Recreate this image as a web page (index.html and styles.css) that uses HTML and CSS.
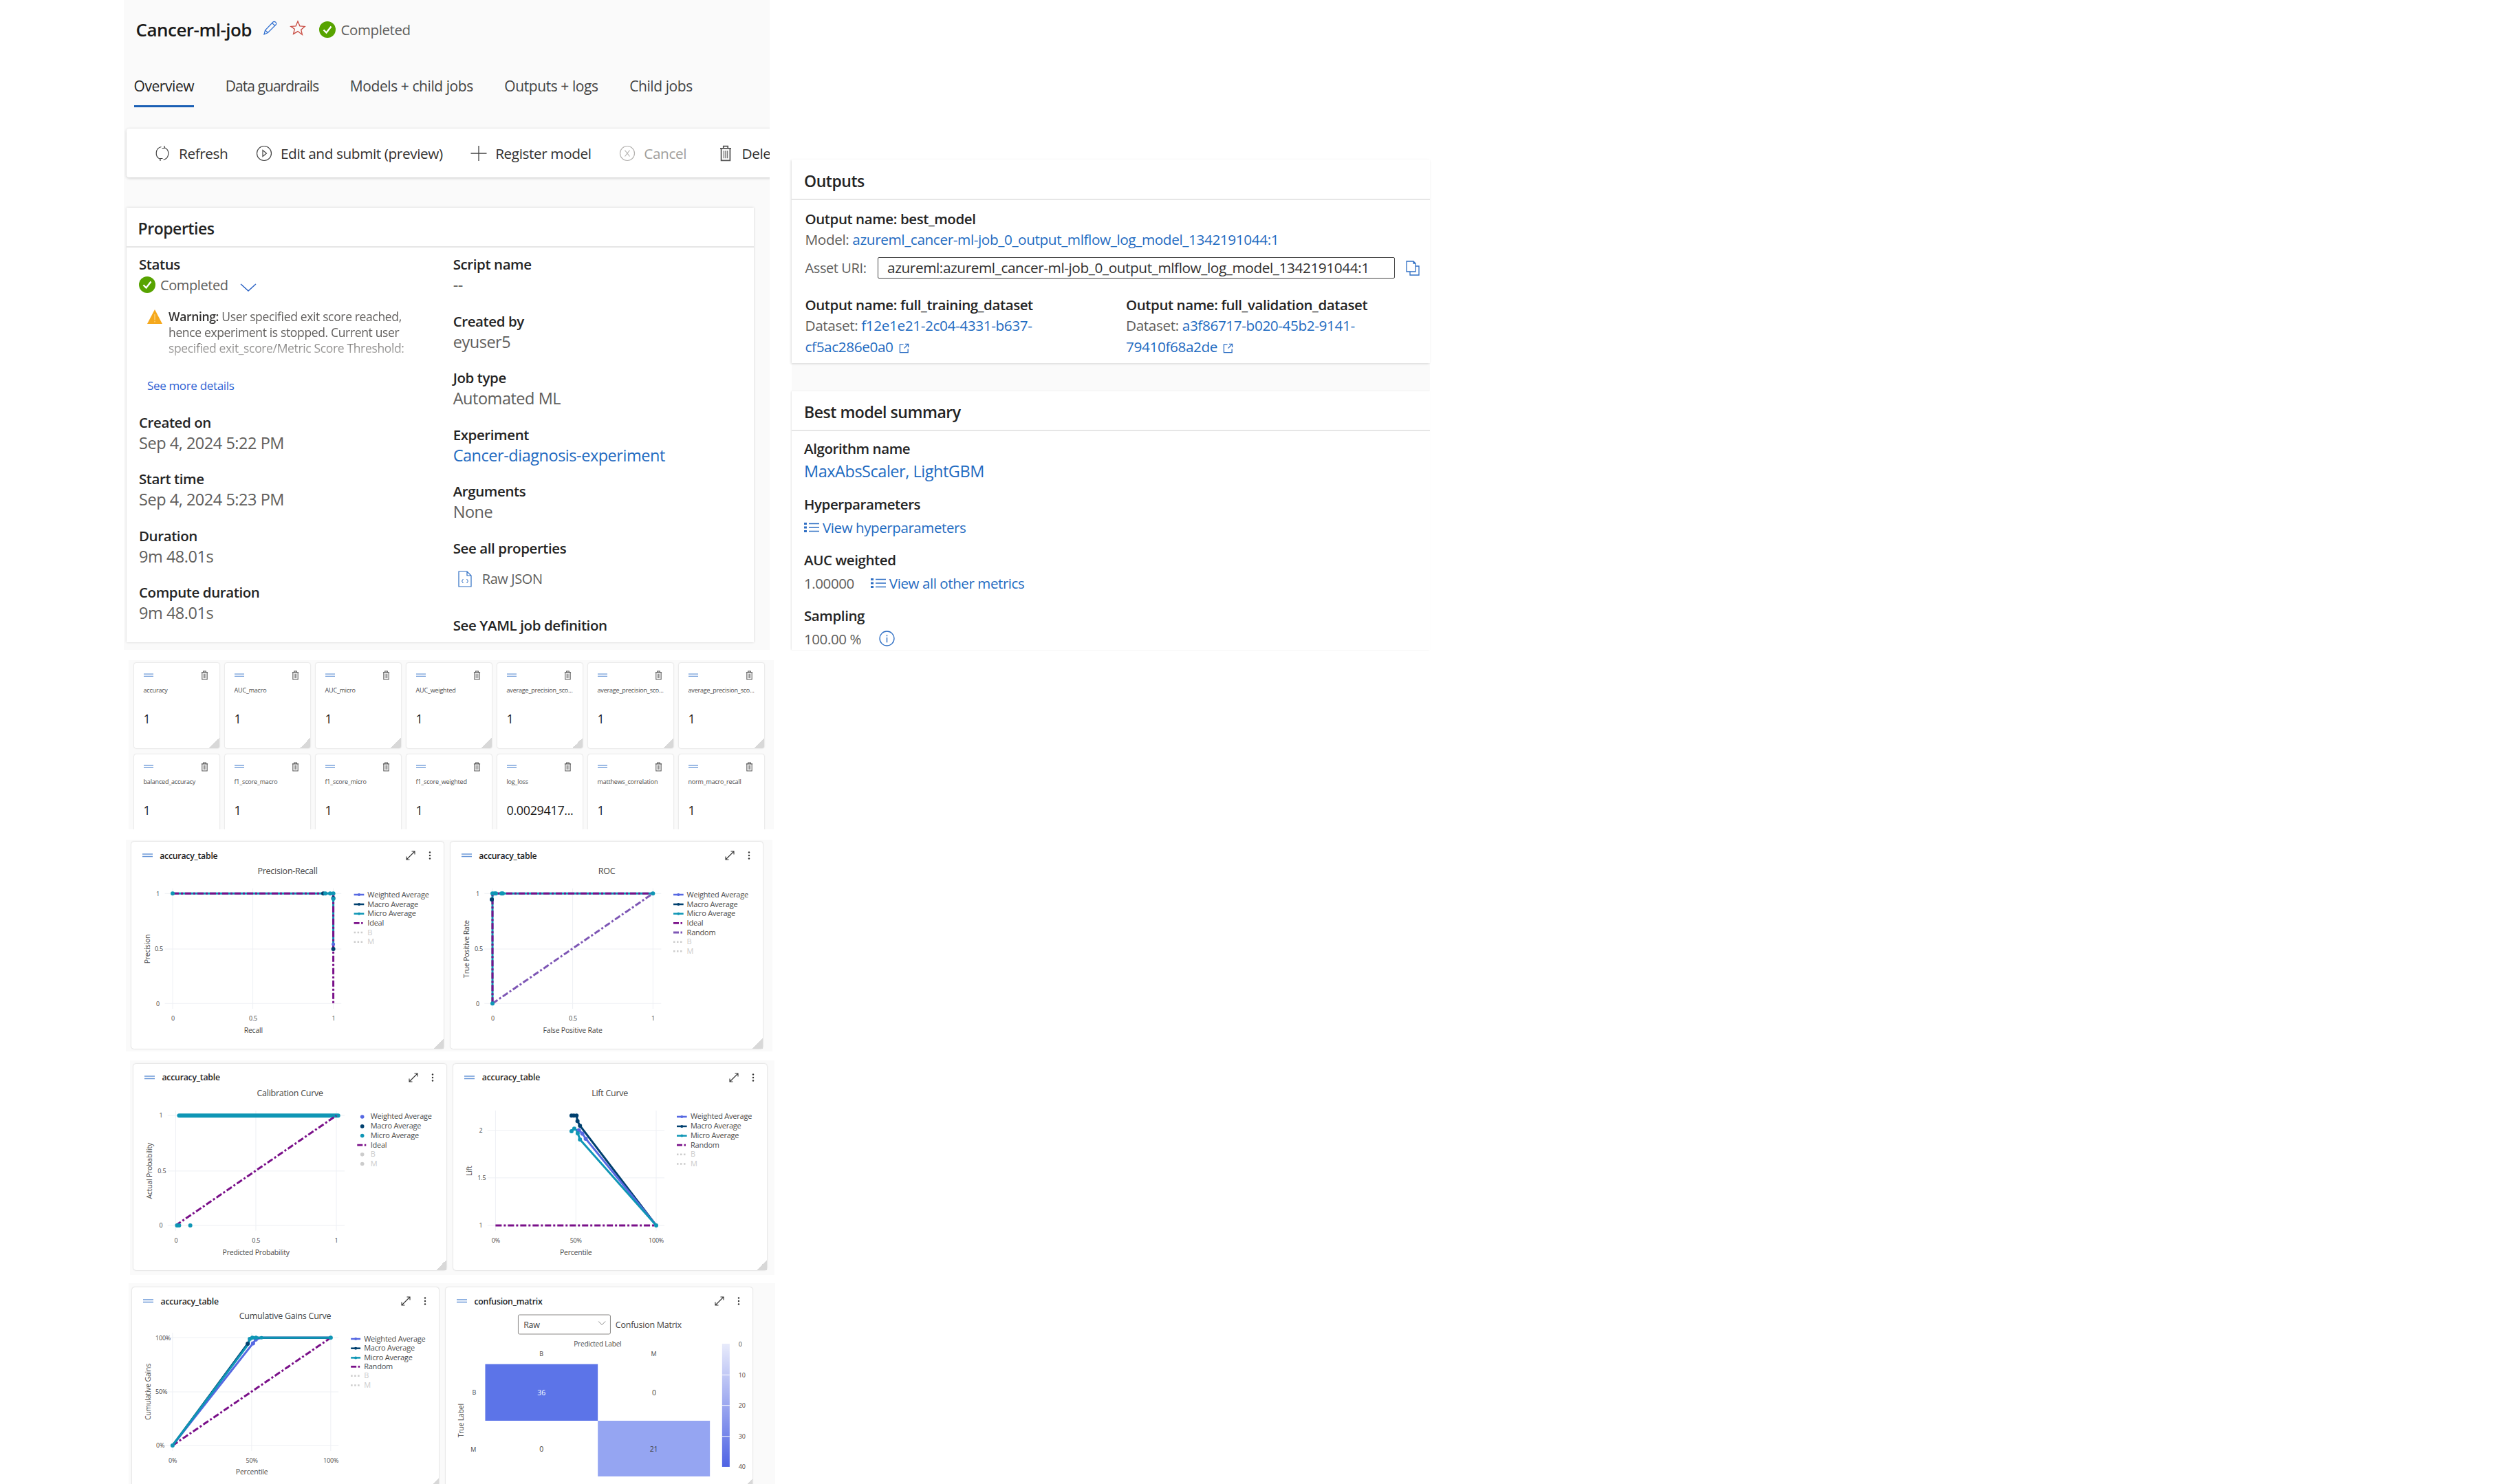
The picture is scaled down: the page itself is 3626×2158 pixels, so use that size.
FILE: index.html
```html
<!DOCTYPE html>
<html lang="en">
<head>
<meta charset="utf-8">
<title>Cancer-ml-job</title>
<link rel="stylesheet" href="styles.css">
</head>
<body>
<svg class="sprite" aria-hidden="true">
  <symbol id="i-check" viewBox="0 0 24 24"><circle cx="12" cy="12" r="12" fill="#57a300"/><path d="M6.5 12.5l4 4 7-9" fill="none" stroke="#fff" stroke-width="2.4"/></symbol>
  <symbol id="i-trash" viewBox="0 0 12 15"><path d="M1 3h10M4 3V1h4v2M2 3v11h8V3" fill="none" stroke="#555" stroke-width="1.1"/><path d="M4.4 5v7M6 5v7M7.6 5v7" stroke="#777" stroke-width=".9"/></symbol>
  <symbol id="i-eq" viewBox="0 0 15 6"><path d="M0 1h15M0 4.5h15" stroke="#6c99d8" stroke-width="1.4"/></symbol>
  <symbol id="i-expand" viewBox="0 0 14 14"><path d="M1 13L13 1M8.5 1H13V5.5M1 8.5V13H5.5" fill="none" stroke="#333" stroke-width="1.1"/></symbol>
  <symbol id="i-dots" viewBox="0 0 4 12"><circle cx="2" cy="1.5" r="1.2" fill="#333"/><circle cx="2" cy="6" r="1.2" fill="#333"/><circle cx="2" cy="10.5" r="1.2" fill="#333"/></symbol>
  <symbol id="i-list" viewBox="0 0 22 16"><path d="M7 2.5h15M7 8h15M7 13.500h15" stroke="#2f6fc4" stroke-width="1.3"/><path d="M0 1h4v3H0zM0 6.500h4v3H0zM0 12h4v3H0z" fill="#2f6fc4"/></symbol>
  <symbol id="i-ext" viewBox="0 0 16 16"><path d="M7 2H1.500v12.500H14V9M9.500 1.500H14.500V6.500M14.500 1.500L8 8" fill="none" stroke="#2f6fc4" stroke-width="1.4"/></symbol>
</svg>

<div class="page">
  <div class="left">
    <section class="job">
      <header class="job-head">
        <h1 class="job-title">Cancer-ml-job</h1>
        <svg class="ic-pencil" viewBox="0 0 24 24"><path d="M3.500 21l1.500-6L16.500 3a2.300 2.300 0 0 1 3.300 0l.7.7a2.300 2.300 0 0 1 0 3.300L9 18.500zM5 15l4 3.500M15 4.500l4.500 4" fill="none" stroke="#2f6fd0" stroke-width="1.2"/></svg>
        <svg class="ic-star" viewBox="0 0 24 24"><path d="M12 2l2.900 6.800 7.300.6-5.500 4.800 1.700 7.200L12 16.600l-6.400 3.800 1.700-7.200L1.800 9.400l7.300-.6z" fill="none" stroke="#c8493f" stroke-width="1.300"/></svg>
        <svg class="ic-check-lg"><use href="#i-check"/></svg>
        <span class="job-status">Completed</span>
      </header>
      <nav class="tabs">
        <a class="tab active">Overview</a>
        <a class="tab tight">Data guardrails</a>
        <a class="tab">Models + child jobs</a>
        <a class="tab">Outputs + logs</a>
        <a class="tab">Child jobs</a>
      </nav>
      <div class="toolbar">
        <span class="tool"><svg class="tool-ic" viewBox="0 0 24 24"><path d="M10.500 2.500A9.500 9.500 0 0 0 9 20.500M13.500 21.500A9.500 9.500 0 0 0 15 3.500M15 1v3.500h-3.500M9 23v-3.500h3.500" fill="none" stroke="#444" stroke-width="1.200"/></svg>Refresh</span>
        <span class="tool"><svg class="tool-ic" viewBox="0 0 24 24"><circle cx="12" cy="12" r="10.500" fill="none" stroke="#444" stroke-width="1.200"/><path d="M10 7.500l5.500 4.500-5.500 4.500z" fill="none" stroke="#444" stroke-width="1.200"/></svg>Edit and submit (preview)</span>
        <span class="tool"><svg class="tool-ic" viewBox="0 0 24 24"><path d="M12 1v22M0.500 12h23" stroke="#444" stroke-width="1.300"/></svg>Register model</span>
        <span class="tool disabled"><svg class="tool-ic" viewBox="0 0 24 24"><circle cx="12" cy="12" r="10.500" fill="none" stroke="#b5b3b1" stroke-width="1.200"/><path d="M8.500 7.500l7 9M15.500 7.500l-7 9" stroke="#b5b3b1" stroke-width="1.200"/></svg>Cancel</span>
        <span class="tool tool-last"><svg class="tool-ic" viewBox="0 0 12 15"><use href="#i-trash"/></svg>Delete</span>
      </div>
      <article class="props">
        <h2 class="card-head props-head">Properties</h2>
        <div class="props-grid">
          <div>
            <h3 class="label">Status</h3>
            <div class="status-row">
              <svg class="ic-check"><use href="#i-check"/></svg>
              <span class="status-text">Completed</span>
              <svg class="ic-chevron" viewBox="0 0 24 12"><path d="M1 1l11 10L23 1" fill="none" stroke="#2b62c4" stroke-width="1.500"/></svg>
            </div>
            <div class="warn">
              <svg class="ic-warn" viewBox="0 0 22 21"><path d="M11 0l11 21H0z" fill="#f5a81c"/><path d="M11 7v8M11 16.500v2" stroke="#fbd27a" stroke-width="1.400"/></svg>
              <p class="warn-text"><b>Warning:</b> User specified exit score reached,<br>hence experiment is stopped. Current user<br>specified exit_score/Metric Score Threshold:</p>
            </div>
            <a class="more">See more details</a>
            <div class="field first"><h3 class="label">Created on</h3><p class="value">Sep 4, 2024 5:22 PM</p></div>
            <div class="field"><h3 class="label">Start time</h3><p class="value">Sep 4, 2024 5:23 PM</p></div>
            <div class="field"><h3 class="label">Duration</h3><p class="value">9m 48.01s</p></div>
            <div class="field"><h3 class="label">Compute duration</h3><p class="value">9m 48.01s</p></div>
          </div>
          <div>
            <div class="field"><h3 class="label">Script name</h3><p class="value">--</p></div>
            <div class="field"><h3 class="label">Created by</h3><p class="value">eyuser5</p></div>
            <div class="field"><h3 class="label">Job type</h3><p class="value">Automated ML</p></div>
            <div class="field"><h3 class="label">Experiment</h3><p class="value link">Cancer-diagnosis-experiment</p></div>
            <div class="field"><h3 class="label">Arguments</h3><p class="value">None</p></div>
            <h3 class="label">See all properties</h3>
            <div class="raw"><svg class="ic-doc" viewBox="0 0 20 24"><path d="M1 1h12l6 6v16H1zM13 1v6h6" fill="none" stroke="#2f6fc4" stroke-width="1.200"/><path d="M7.500 12l-2 3 2 3M12.500 12l2 3-2 3" fill="none" stroke="#2f6fc4" stroke-width="1"/></svg>Raw JSON</div>
            <h3 class="label yaml">See YAML job definition</h3>
          </div>
        </div>
      </article>
    </section>

    <section class="metrics">
      <div class="tile"><div class="tile-top"><svg class="eq"><use href="#i-eq"/></svg><svg class="tile-trash"><use href="#i-trash"/></svg></div><div class="tile-name">accuracy</div><div class="tile-val">1</div></div>
      <div class="tile"><div class="tile-top"><svg class="eq"><use href="#i-eq"/></svg><svg class="tile-trash"><use href="#i-trash"/></svg></div><div class="tile-name">AUC_macro</div><div class="tile-val">1</div></div>
      <div class="tile"><div class="tile-top"><svg class="eq"><use href="#i-eq"/></svg><svg class="tile-trash"><use href="#i-trash"/></svg></div><div class="tile-name">AUC_micro</div><div class="tile-val">1</div></div>
      <div class="tile"><div class="tile-top"><svg class="eq"><use href="#i-eq"/></svg><svg class="tile-trash"><use href="#i-trash"/></svg></div><div class="tile-name">AUC_weighted</div><div class="tile-val">1</div></div>
      <div class="tile"><div class="tile-top"><svg class="eq"><use href="#i-eq"/></svg><svg class="tile-trash"><use href="#i-trash"/></svg></div><div class="tile-name">average_precision_sco...</div><div class="tile-val">1</div></div>
      <div class="tile"><div class="tile-top"><svg class="eq"><use href="#i-eq"/></svg><svg class="tile-trash"><use href="#i-trash"/></svg></div><div class="tile-name">average_precision_sco...</div><div class="tile-val">1</div></div>
      <div class="tile"><div class="tile-top"><svg class="eq"><use href="#i-eq"/></svg><svg class="tile-trash"><use href="#i-trash"/></svg></div><div class="tile-name">average_precision_sco...</div><div class="tile-val">1</div></div>
      <div class="tile"><div class="tile-top"><svg class="eq"><use href="#i-eq"/></svg><svg class="tile-trash"><use href="#i-trash"/></svg></div><div class="tile-name">balanced_accuracy</div><div class="tile-val">1</div></div>
      <div class="tile"><div class="tile-top"><svg class="eq"><use href="#i-eq"/></svg><svg class="tile-trash"><use href="#i-trash"/></svg></div><div class="tile-name">f1_score_macro</div><div class="tile-val">1</div></div>
      <div class="tile"><div class="tile-top"><svg class="eq"><use href="#i-eq"/></svg><svg class="tile-trash"><use href="#i-trash"/></svg></div><div class="tile-name">f1_score_micro</div><div class="tile-val">1</div></div>
      <div class="tile"><div class="tile-top"><svg class="eq"><use href="#i-eq"/></svg><svg class="tile-trash"><use href="#i-trash"/></svg></div><div class="tile-name">f1_score_weighted</div><div class="tile-val">1</div></div>
      <div class="tile"><div class="tile-top"><svg class="eq"><use href="#i-eq"/></svg><svg class="tile-trash"><use href="#i-trash"/></svg></div><div class="tile-name">log_loss</div><div class="tile-val">0.0029417...</div></div>
      <div class="tile"><div class="tile-top"><svg class="eq"><use href="#i-eq"/></svg><svg class="tile-trash"><use href="#i-trash"/></svg></div><div class="tile-name">matthews_correlation</div><div class="tile-val">1</div></div>
      <div class="tile"><div class="tile-top"><svg class="eq"><use href="#i-eq"/></svg><svg class="tile-trash"><use href="#i-trash"/></svg></div><div class="tile-name">norm_macro_recall</div><div class="tile-val">1</div></div>
    </section>

    <section class="chart-row row-a">
      <div class="chart-card">
        <div class="chart-head"><svg class="eq"><use href="#i-eq"/></svg><span class="chart-name">accuracy_table</span><svg class="expand"><use href="#i-expand"/></svg><svg class="dots"><use href="#i-dots"/></svg></div>
        <svg class="plot" viewBox="0 34 454 267">
          <text class="c-title" x="227" y="47">Precision-Recall</text>
          <path class="grid" d="M48.600 75.300H305.300M48.600 156H305.300M48.600 235.300H305.300M60 68V243M176.600 68V243M293.600 68V243"/>
          <text class="tick end" x="41" y="78.500">1</text><text class="tick end" x="46" y="159">0.5</text><text class="tick end" x="41" y="238.500">0</text>
          <text class="tick mid" x="60.500" y="260">0</text><text class="tick mid" x="177" y="260">0.5</text><text class="tick mid" x="294" y="260">1</text>
          <text class="axis mid" x="177.300" y="278">Recall</text>
          <text class="axis mid" transform="translate(27 156) rotate(-90)">Precision</text>
          <path class="ln mi" d="M60 75.300H293.600V156"/>
          <path class="ln id" d="M60 75.300H293.600V235.300"/>
          <circle class="d-mi" cx="60" cy="75.300" r="3"/><circle class="d-ma" cx="279" cy="75.300" r="3"/><circle class="d-mi" cx="282" cy="75.300" r="3"/><circle class="d-mi" cx="289" cy="75.300" r="3"/><circle class="d-mi" cx="293.600" cy="75.300" r="3"/><circle class="d-ma" cx="293.600" cy="82" r="3"/><circle class="d-mi" cx="293.600" cy="83" r="3"/><circle class="d-w" cx="293.600" cy="149" r="2.500"/><circle class="d-ma" cx="293.600" cy="156" r="3"/>
          <path class="lg-l s-w" d="M323.600 77h14.700"/><circle class="d-w" cx="331" cy="77" r="2"/><text class="lg" x="343.300" y="80.500">Weighted Average</text>
          <path class="lg-l s-ma" d="M323.600 91h14.700"/><circle class="d-ma" cx="331" cy="91" r="2"/><text class="lg" x="343.300" y="94.500">Macro Average</text>
          <path class="lg-l s-mi" d="M323.600 104.700h14.700"/><circle class="d-mi" cx="331" cy="104.700" r="2"/><text class="lg" x="343.300" y="108.200">Micro Average</text>
          <path class="lg-l s-id" d="M323.600 118.300h14.700"/><text class="lg" x="343.300" y="121.800">Ideal</text>
          <path class="lg-d" d="M323.600 132h14.700"/><text class="lg off" x="343.300" y="135.500">B</text>
          <path class="lg-d" d="M323.600 145.700h14.700"/><text class="lg off" x="343.300" y="149.200">M</text>
        </svg>
      </div>
      <div class="chart-card">
        <div class="chart-head"><svg class="eq"><use href="#i-eq"/></svg><span class="chart-name">accuracy_table</span><svg class="expand"><use href="#i-expand"/></svg><svg class="dots"><use href="#i-dots"/></svg></div>
        <svg class="plot" viewBox="0 34 454 267">
          <text class="c-title" x="227" y="47">ROC</text>
          <path class="grid" d="M49.300 75.300H306.300M49.300 156H306.300M49.300 235.300H306.300M61 68V243M177.600 68V243M294.300 68V243"/>
          <text class="tick end" x="42" y="78.500">1</text><text class="tick end" x="47" y="159">0.5</text><text class="tick end" x="42" y="238.500">0</text>
          <text class="tick mid" x="61.500" y="260">0</text><text class="tick mid" x="178" y="260">0.5</text><text class="tick mid" x="294.500" y="260">1</text>
          <text class="axis mid" x="177.600" y="278">False Positive Rate</text>
          <text class="axis mid" transform="translate(27 156) rotate(-90)">True Positive Rate</text>
          <path class="ln ra" d="M61 235.300L294.300 75.300"/>
          <path class="ln mi" d="M61 235.300V75.300H294.300"/>
          <path class="ln id" d="M61 235.300V75.300H294.300"/>
          <circle class="d-mi" cx="61" cy="235.300" r="3"/><circle class="d-ma" cx="60" cy="84" r="3"/><circle class="d-mi" cx="61" cy="75.300" r="3"/><circle class="d-mi" cx="64" cy="75.300" r="3"/><circle class="d-mi" cx="66" cy="75.300" r="3"/><circle class="d-mi" cx="74" cy="75.300" r="3"/><circle class="d-mi" cx="76" cy="75.300" r="3"/><circle class="d-mi" cx="294.300" cy="75.300" r="3"/>
          <path class="lg-l s-w" d="M324 77h14.700"/><circle class="d-w" cx="331.300" cy="77" r="2"/><text class="lg" x="343.600" y="80.500">Weighted Average</text>
          <path class="lg-l s-ma" d="M324 91h14.700"/><circle class="d-ma" cx="331.300" cy="91" r="2"/><text class="lg" x="343.600" y="94.500">Macro Average</text>
          <path class="lg-l s-mi" d="M324 104.700h14.700"/><circle class="d-mi" cx="331.300" cy="104.700" r="2"/><text class="lg" x="343.600" y="108.200">Micro Average</text>
          <path class="lg-l s-id" d="M324 118.300h14.700"/><text class="lg" x="343.600" y="121.800">Ideal</text>
          <path class="lg-l s-ra" d="M324 132h14.700"/><text class="lg" x="343.600" y="135.500">Random</text>
          <path class="lg-d" d="M324 145.700h14.700"/><text class="lg off" x="343.600" y="149.200">B</text>
          <path class="lg-d" d="M324 159.300h14.700"/><text class="lg off" x="343.600" y="162.800">M</text>
        </svg>
      </div>
    </section>

    <section class="chart-row row-b">
      <div class="chart-card">
        <div class="chart-head"><svg class="eq"><use href="#i-eq"/></svg><span class="chart-name">accuracy_table</span><svg class="expand"><use href="#i-expand"/></svg><svg class="dots"><use href="#i-dots"/></svg></div>
        <svg class="plot" viewBox="0 34 455 267">
          <text class="c-title" x="227.500" y="47">Calibration Curve</text>
          <path class="grid" d="M49.300 75.300H307M49.300 156H307M49.300 235.300H307M61 68V243M177.700 68V243M295 68V243"/>
          <text class="tick end" x="42" y="78.500">1</text><text class="tick end" x="47" y="159">0.5</text><text class="tick end" x="42" y="238.500">0</text>
          <text class="tick mid" x="61.500" y="260">0</text><text class="tick mid" x="178" y="260">0.5</text><text class="tick mid" x="295" y="260">1</text>
          <text class="axis mid" x="178" y="278">Predicted Probability</text>
          <text class="axis mid" transform="translate(27 156) rotate(-90)">Actual Probability</text>
          <path class="scatter" d="M66 75.300H297.700"/>
          <path class="ln id" d="M61 235.300L295 75.300"/>
          <circle class="d-mi" cx="63" cy="235.300" r="3"/><circle class="d-mi" cx="66" cy="235.300" r="3"/><circle class="d-mi" cx="82.300" cy="235.300" r="3"/>
          <circle class="d-w" cx="332.700" cy="77" r="2.800"/><text class="lg" x="344.700" y="80.500">Weighted Average</text>
          <circle class="d-ma" cx="332.700" cy="91" r="2.800"/><text class="lg" x="344.700" y="94.500">Macro Average</text>
          <circle class="d-mi" cx="332.700" cy="104.700" r="2.800"/><text class="lg" x="344.700" y="108.200">Micro Average</text>
          <path class="lg-l s-id" d="M325.300 118.300h14.700"/><text class="lg" x="344.700" y="121.800">Ideal</text>
          <circle class="d-off" cx="332.700" cy="132" r="2.800"/><text class="lg off" x="344.700" y="135.500">B</text>
          <circle class="d-off" cx="332.700" cy="145.700" r="2.800"/><text class="lg off" x="344.700" y="149.200">M</text>
        </svg>
      </div>
      <div class="chart-card">
        <div class="chart-head"><svg class="eq"><use href="#i-eq"/></svg><span class="chart-name">accuracy_table</span><svg class="expand"><use href="#i-expand"/></svg><svg class="dots"><use href="#i-dots"/></svg></div>
        <svg class="plot" viewBox="0 34 455 267">
          <text class="c-title" x="227.500" y="47">Lift Curve</text>
          <path class="grid" d="M49.300 96.600H307M49.300 166H307M49.300 235.300H307M61 68V243M178 68V243M295 68V243"/>
          <text class="tick end" x="42" y="99.800">2</text><text class="tick end" x="47" y="169">1.5</text><text class="tick end" x="42" y="238.500">1</text>
          <text class="tick mid" x="61.500" y="260">0%</text><text class="tick mid" x="178" y="260">50%</text><text class="tick mid" x="295" y="260">100%</text>
          <text class="axis mid" x="178" y="278">Percentile</text>
          <text class="axis mid" transform="translate(27 156) rotate(-90)">Lift</text>
          <path class="ln id" d="M61 235.300H295"/>
          <path class="ln s-ma" d="M171.700 75.300H179L180.400 83.300 184 90 295 235.300"/>
          <path class="ln s-w" d="M178 97L182.400 96.600 187.400 101.600 192.400 109 295 235.300"/>
          <path class="ln s-mi" d="M171.700 98L175.700 94.300 179 96.600 180.700 101 184 110 295 235.300"/>
          <circle class="d-ma" cx="171.700" cy="75.300" r="3"/><circle class="d-ma" cx="175" cy="75.300" r="3"/><circle class="d-ma" cx="179" cy="75.300" r="3"/><circle class="d-ma" cx="180.400" cy="83.300" r="3"/><circle class="d-ma" cx="184" cy="90" r="3"/>
          <circle class="d-w" cx="182.400" cy="96.600" r="3"/><circle class="d-w" cx="187.400" cy="101.600" r="3"/><circle class="d-w" cx="192.400" cy="109" r="3"/>
          <circle class="d-mi" cx="171.700" cy="98" r="3"/><circle class="d-mi" cx="175.700" cy="94.300" r="3"/><circle class="d-mi" cx="180.700" cy="101" r="3"/><circle class="d-mi" cx="184" cy="110" r="3"/><circle class="d-mi" cx="295" cy="235.300" r="3"/>
          <path class="lg-l s-w" d="M325 77h14.700"/><circle class="d-w" cx="332.300" cy="77" r="2"/><text class="lg" x="345" y="80.500">Weighted Average</text>
          <path class="lg-l s-ma" d="M325 91h14.700"/><circle class="d-ma" cx="332.300" cy="91" r="2"/><text class="lg" x="345" y="94.500">Macro Average</text>
          <path class="lg-l s-mi" d="M325 104.700h14.700"/><circle class="d-mi" cx="332.300" cy="104.700" r="2"/><text class="lg" x="345" y="108.200">Micro Average</text>
          <path class="lg-l s-id" d="M325 118.300h14.700"/><text class="lg" x="345" y="121.800">Random</text>
          <path class="lg-d" d="M325 132h14.700"/><text class="lg off" x="345" y="135.500">B</text>
          <path class="lg-d" d="M325 145.700h14.700"/><text class="lg off" x="345" y="149.200">M</text>
        </svg>
      </div>
    </section>

    <section class="chart-row row-c">
      <div class="chart-card">
        <div class="chart-head"><svg class="eq"><use href="#i-eq"/></svg><span class="chart-name">accuracy_table</span><svg class="expand"><use href="#i-expand"/></svg><svg class="dots"><use href="#i-dots"/></svg></div>
        <svg class="plot" viewBox="0 34 446 259">
          <text class="c-title" x="222.300" y="45.500">Cumulative Gains Curve</text>
          <path class="grid" d="M48 73.300H300M48 152H300M48 230H300M58.700 66V238M173.700 66V238M288.700 66V238"/>
          <text class="tick end" x="56" y="76.500">100%</text><text class="tick end" x="51" y="155">50%</text><text class="tick end" x="47" y="233">0%</text>
          <text class="tick mid" x="59" y="255">0%</text><text class="tick mid" x="174" y="255">50%</text><text class="tick mid" x="289" y="255">100%</text>
          <text class="axis mid" x="174" y="272">Percentile</text>
          <text class="axis mid" transform="translate(27 152) rotate(-90)">Cumulative Gains</text>
          <path class="ln id" d="M58.700 230L288.700 73.300"/>
          <path class="ln s-w" d="M58.700 230L175.700 81.400 179.700 76 188 73.300H288.700"/>
          <path class="ln s-ma" d="M58.700 230L168 82 170.700 76 174 73.300H288.700"/>
          <path class="ln s-mi" d="M58.700 230L168.700 83 171 75 174.700 73 180 73.300H288.700"/>
          <circle class="d-w" cx="175.700" cy="81.400" r="3"/><circle class="d-w" cx="179.700" cy="76" r="3"/><circle class="d-mi" cx="188" cy="73.300" r="2.500"/><circle class="d-ma" cx="168" cy="82" r="3"/><circle class="d-mi" cx="171" cy="75" r="3"/><circle class="d-mi" cx="174.700" cy="73.300" r="3"/><circle class="d-mi" cx="180" cy="73.300" r="3"/><circle class="d-mi" cx="58.700" cy="230" r="3"/><circle class="d-mi" cx="288.700" cy="73.300" r="3"/>
          <path class="lg-l s-w" d="M318 75h14"/><circle class="d-w" cx="325" cy="75" r="2"/><text class="lg" x="337" y="78.500">Weighted Average</text>
          <path class="lg-l s-ma" d="M318 88.700h14"/><circle class="d-ma" cx="325" cy="88.700" r="2"/><text class="lg" x="337" y="92.200">Macro Average</text>
          <path class="lg-l s-mi" d="M318 102.400h14"/><circle class="d-mi" cx="325" cy="102.400" r="2"/><text class="lg" x="337" y="105.900">Micro Average</text>
          <path class="lg-l s-id" d="M318 115.400h14"/><text class="lg" x="337" y="118.900">Random</text>
          <path class="lg-d" d="M318 128.700h14"/><text class="lg off" x="337" y="132.200">B</text>
          <path class="lg-d" d="M318 142.400h14"/><text class="lg off" x="337" y="145.900">M</text>
        </svg>
      </div>
      <div class="chart-card">
        <div class="chart-head"><svg class="eq"><use href="#i-eq"/></svg><span class="chart-name">confusion_matrix</span><svg class="expand"><use href="#i-expand"/></svg><svg class="dots"><use href="#i-dots"/></svg></div>
        <svg class="plot" viewBox="0 34 446 259">
          <rect class="sel-box" x="105.300" y="40" width="134" height="28" rx="2"/>
          <text class="sel-text" x="113" y="59">Raw</text>
          <path class="sel-chev" d="M222 49.500l5 5 5-5"/>
          <text class="c-title start" x="246.700" y="59">Confusion Matrix</text>
          <text class="tick2 mid" x="220.700" y="85.500">Predicted Label</text>
          <text class="tick mid" x="139" y="100">B</text><text class="tick mid" x="302.300" y="100">M</text>
          <rect class="cell-a" x="57.300" y="111.700" width="163.700" height="82.300"/>
          <rect class="cell-b" x="221" y="194" width="163" height="81"/>
          <text class="cell-w mid" x="139" y="156.500">36</text><text class="cell-d mid" x="302.700" y="156.500">0</text><text class="cell-d mid" x="139" y="239">0</text><text class="cell-d mid" x="302.300" y="239">21</text>
          <text class="tick mid" x="41.300" y="156">B</text><text class="tick mid" x="40" y="238.500">M</text>
          <text class="axis mid" transform="translate(26 193.700) rotate(-90)">True Label</text>
          <defs><linearGradient id="cbar" x1="0" y1="0" x2="0" y2="1"><stop offset="0" stop-color="#e8ebfb"/><stop offset="1" stop-color="#4f63e4"/></linearGradient></defs>
          <rect x="401.700" y="82" width="11" height="179" fill="url(#cbar)"/>
          <path class="cbar-tick" d="M401.700 127.400h11M401.700 171.700h11M401.700 216.700h11"/>
          <text class="tick" x="425.700" y="86">0</text><text class="tick" x="425.700" y="131">10</text><text class="tick" x="425.700" y="175">20</text><text class="tick" x="425.700" y="220">30</text><text class="tick" x="425.700" y="264">40</text>
        </svg>
      </div>
    </section>
  </div>

  <div class="right">
    <article class="out-card">
      <h2 class="card-head">Outputs</h2>
      <div class="out-body">
        <h3 class="label">Output name: best_model</h3>
        <p class="line">Model: <a class="link">azureml_cancer-ml-job_0_output_mlflow_log_model_1342191044:1</a></p>
        <div class="uri-row">
          <span class="uri-label">Asset URI:</span>
          <span class="uri-box">azureml:azureml_cancer-ml-job_0_output_mlflow_log_model_1342191044:1</span>
          <svg class="ic-copy" viewBox="0 0 20 22"><path d="M1 1h10l3 3v12H1zM11 1v3h3M6 16v5h13V8h-5" fill="none" stroke="#2f6fc4" stroke-width="1.300"/></svg>
        </div>
        <div class="ds-grid">
          <div><h3 class="label">Output name: full_training_dataset</h3><p class="line">Dataset: <a class="link">f12e1e21-2c04-4331-b637-<br>cf5ac286e0a0</a> <svg class="ic-ext"><use href="#i-ext"/></svg></p></div>
          <div><h3 class="label">Output name: full_validation_dataset</h3><p class="line">Dataset: <a class="link">a3f86717-b020-45b2-9141-<br>79410f68a2de</a> <svg class="ic-ext"><use href="#i-ext"/></svg></p></div>
        </div>
      </div>
    </article>
    <article class="sum-card">
      <h2 class="card-head sum-head">Best model summary</h2>
      <div class="sum-body">
        <div class="sum first-sum"><h3 class="label">Algorithm name</h3><p class="value link">MaxAbsScaler, LightGBM</p></div>
        <div class="sum"><h3 class="label">Hyperparameters</h3><p class="line2"><svg class="ic-list"><use href="#i-list"/></svg><a class="link">View hyperparameters</a></p></div>
        <div class="sum"><h3 class="label">AUC weighted</h3><p class="line2"><span class="num">1.00000</span><svg class="ic-list"><use href="#i-list"/></svg><a class="link">View all other metrics</a></p></div>
        <div class="sum"><h3 class="label">Sampling</h3><p class="line2"><span class="num pct">100.00 %</span><svg class="ic-info" viewBox="0 0 22 22"><circle cx="11" cy="11" r="10" fill="none" stroke="#2f6fc4" stroke-width="1.300"/><path d="M11 9.500v7M11 6v1.800" stroke="#2f6fc4" stroke-width="1.400"/></svg></p></div>
      </div>
    </article>
  </div>
</div>
</body>
</html>
```

FILE: styles.css
```css
* { box-sizing: border-box; letter-spacing: -0.02em; }
html, body { margin: 0; padding: 0; background: #fff; }
body { font-family: "Open Sans", "Noto Sans", sans-serif; color: #242424; }
h1, h2, h3, p { margin: 0; font-weight: inherit; font-size: inherit; }
.sprite { position: absolute; width: 0; height: 0; }

.page { display: flex; align-items: flex-start; width: 3626px; height: 2158px; padding-left: 180px; overflow: hidden; }
.left { width: 950px; flex: none; display: flex; flex-direction: column; }
.right { width: 928px; flex: none; margin: 232px 0 0 21px; background: #fafafa; }

/* job panel */
.job { width: 939px; height: 945px; background: #fafafa; overflow: hidden; }
.job-head { height: 86px; padding-left: 17.5px; display: flex; align-items: center; }
.job-title { font-size: 26px; font-weight: 600; color: #1a1a1a; line-height: 1; }
.ic-pencil { width: 25px; height: 24px; margin-left: 14px; margin-top: -4px; }
.ic-star { width: 24px; height: 24px; margin-left: 16px; margin-top: -4px; }
.ic-check-lg { width: 24px; height: 24px; margin-left: 19px; }
.job-status { margin-left: 7.5px; font-size: 20.5px; color: #605e5c; }

.tabs { display: flex; gap: 45.5px; margin-top: 14px; padding-left: 14.5px; }
.tab { font-size: 21px; line-height: 30px; height: 56px; padding-top: 10px; color: #444; }
.tab.tight { letter-spacing: -0.045em; }
.tab.active { color: #242424; border-bottom: 3px solid #1a5fb4; }

.toolbar { display: flex; align-items: center; gap: 40.5px; width: 980px; height: 71px; margin: 31px 0 0 3.500px; padding-left: 40.500px; background: #fff; border-radius: 4px; box-shadow: 0 1px 4px rgba(0,0,0,.2); }
.tool { display: flex; align-items: center; gap: 12px; font-size: 20.8px; color: #323130; white-space: nowrap; }
.tool.disabled { color: #a19f9d; }
.tool-last { margin-left: 4px; }
.tool-ic { width: 24px; height: 24px; flex: none; }

.props { width: 912.500px; height: 632px; margin: 44px 0 0 3.500px; background: #fff; box-shadow: 0 0 3px rgba(0,0,0,.18); overflow: hidden; }
.card-head { font-size: 23px; font-weight: 600; line-height: 30px; height: 58px; padding: 15px 0 0 17px; color: #242424; border-bottom: 2px solid #e6e6e6; }
.props-grid { display: grid; grid-template-columns: 456.700px 1fr; padding: 9px 0 0 18.500px; }
.label { font-size: 20.500px; font-weight: 600; line-height: 30px; color: #242424; }
.value { font-size: 23.500px; line-height: 30px; color: #605e5c; }
.link { color: #1f6bc1; }
.value.link { color: #1f6bc1; }
.field { margin-bottom: 22.500px; }
.field.first { margin-top: 26px; }
.status-row { display: flex; align-items: center; height: 30px; }
.ic-check { width: 24px; height: 24px; }
.status-text { margin-left: 7px; font-size: 20px; color: #605e5c; }
.ic-chevron { width: 24px; height: 12px; margin: 8px 0 0 17px; }
.warn { display: flex; gap: 9px; margin: 19.500px 0 0 12px; }
.ic-warn { width: 22px; height: 21px; flex: none; margin-top: 1px; }
.warn-text { font-size: 17.5px; line-height: 23px; color: #605e5c; white-space: nowrap; -webkit-mask-image: linear-gradient(#000 60%, rgba(0,0,0,.45)); mask-image: linear-gradient(#000 60%, rgba(0,0,0,.45)); }
.warn-text b { font-weight: 600; color: #323130; }
.more { display: block; margin: 31px 0 0 12px; font-size: 17px; line-height: 24px; color: #2f64d4; }
.raw { display: flex; align-items: center; gap: 15px; height: 30px; margin: 15px 0 0 7px; font-size: 20px; color: #605e5c; }
.ic-doc { width: 20px; height: 24px; }
.yaml { margin-top: 37px; }

/* metrics */
.metrics { display: grid; grid-template-columns: repeat(7, 124px); grid-auto-rows: 124px; gap: 9px 8px; width: 938.500px; height: 246px; margin: 15px 0 0 6.500px; padding: 4px 0 0 8px; background: #fafafa; overflow: hidden; }
.tile { position: relative; padding: 0 14px; background: #fff; border-radius: 3px; box-shadow: 0 0 2px rgba(0,0,0,.22); overflow: hidden; }
.tile::after, .chart-card::after { content: ""; position: absolute; right: 0; bottom: 0; width: 15px; height: 15px; background: linear-gradient(135deg, transparent 50%, #d8d8d8 50%); }
.tile-top { display: flex; justify-content: space-between; align-items: center; height: 15px; margin-top: 10px; }
.eq { width: 14px; height: 6px; flex: none; }
.tile-trash { width: 11px; height: 14px; margin-right: 2px; }
.tile-name { margin-top: 8px; font-size: 9px; line-height: 14px; color: #4a4a4a; white-space: nowrap; }
.tile-val { margin-top: 21px; font-size: 18px; line-height: 26px; color: #1a1a1a; white-space: nowrap; }

/* charts */
.chart-row { display: flex; background: #fafafa; overflow: hidden; }
.row-a { gap: 10px; width: 940px; height: 308px; margin: 15px 0 0 3px; padding: 3px 0 0 7.700px; }
.row-a .chart-card { width: 454px; height: 301px; }
.row-b { gap: 10px; width: 937px; height: 312px; margin: 13px 0 0 9.300px; padding: 4.700px 0 0 4.700px; }
.row-b .chart-card { width: 455.300px; height: 300.600px; }
.row-c { gap: 9.700px; width: 940px; height: 292px; margin: 12px 0 0 7px; padding: 6.300px 0 0 5px; }
.row-c .chart-card { flex: none; width: 446.300px; height: 293px; }
.chart-card { position: relative; flex: none; background: #fff; border-radius: 4px; box-shadow: 0 0 2px rgba(0,0,0,.25); }
.chart-head { display: flex; align-items: center; height: 34px; padding: 6px 18px 0 16px; }
.chart-head .eq { width: 15px; }
.chart-name { margin-left: 10.500px; font-size: 12.300px; font-weight: 600; color: #242424; }
.expand { width: 14px; height: 14px; margin-left: auto; }
.dots { width: 4px; height: 12px; margin-left: 19px; }
.plot { display: block; width: 100%; height: calc(100% - 34px); overflow: visible; }
.plot text { font-family: "Open Sans", sans-serif; }
.c-title { font-size: 12.500px; fill: #444; text-anchor: middle; }
.c-title.start { text-anchor: start; }
.tick { font-size: 9px; fill: #4a4a4a; }
.tick2 { font-size: 10px; fill: #4a4a4a; }
.axis { font-size: 10.500px; fill: #4a4a4a; }
.mid { text-anchor: middle; }
.end { text-anchor: end; }
.lg { font-size: 11px; fill: #4a4a4a; }
.lg.off { fill: #ccc; }
.grid { fill: none; stroke: #eef0f4; stroke-width: 1; }
.ln { fill: none; stroke-width: 3px; }
.ln.id { stroke: #7a1089; stroke-width: 3px; stroke-dasharray: 9 3 3 3; }
.ln.ra { stroke: #7e57b5; stroke-width: 3px; stroke-dasharray: 9 3 3 3; }
.ln.mi, .ln.s-mi { stroke: #0f96b5; }
.ln.s-w { stroke: #5668e2; }
.ln.s-ma { stroke: #00406f; }
.scatter { fill: none; stroke: #0f96b5; stroke-width: 6px; stroke-linecap: round; }
.lg-l { fill: none; stroke-width: 2.500px; }
.s-w { stroke: #5668e2; }
.s-ma { stroke: #00406f; }
.s-mi { stroke: #0f96b5; }
.s-id { stroke: #7a1089; stroke-width: 2.800px; stroke-dasharray: 8 2.500 2.500 2.500; }
.s-ra { stroke: #7e57b5; stroke-width: 2.800px; stroke-dasharray: 8 2.500 2.500 2.500; }
.lg-d { fill: none; stroke: #ccc; stroke-width: 2.500px; stroke-dasharray: 2.500 2.500; }
.d-w { fill: #5668e2; }
.d-ma { fill: #00406f; }
.d-mi { fill: #0f96b5; }
.d-off { fill: #ccc; }
.sel-box { fill: #fff; stroke: #8a8886; stroke-width: 1; }
.sel-text { font-size: 12.500px; fill: #444; }
.sel-chev { fill: none; stroke: #888; stroke-width: 1; }
.cell-a { fill: #5c74e8; }
.cell-b { fill: #95a5f2; }
.cell-w { font-size: 10.500px; fill: #fff; }
.cell-d { font-size: 10.500px; fill: #444; }
.cbar-tick { stroke: #fff; stroke-width: 1; }

/* right column */
.out-card, .sum-card { background: #fff; box-shadow: -1px 0 2px rgba(0,0,0,.1); }
.out-card { height: 296px; box-shadow: -1px 1px 3px rgba(0,0,0,.15); }
.out-card .card-head { height: 59px; padding: 16px 0 0 18px; }
.out-body { padding: 12px 0 0 19.500px; }
.line { font-size: 20.800px; line-height: 30.500px; color: #605e5c; }
.uri-row { display: flex; align-items: center; height: 31px; margin-top: 10.500px; }
.uri-label { flex: none; width: 105px; font-size: 20px; color: #605e5c; }
.uri-box { flex: none; width: 752px; height: 31px; padding-left: 13.500px; border: 1.500px solid #444; border-radius: 2px; font-size: 20.800px; line-height: 28px; color: #323130; white-space: nowrap; overflow: hidden; }
.ic-copy { flex: none; width: 20px; height: 22px; margin-left: 16.500px; }
.ds-grid { display: grid; grid-template-columns: 466.500px 1fr; margin-top: 23px; }
.ic-ext { width: 15px; height: 15px; margin-left: 3px; vertical-align: -2px; }
.sum-card { height: 376px; margin-top: 41px; }
.sum-head { padding: 15px 0 0 18px; }
.sum-body { padding: 10px 0 0 18px; }
.sum { margin-bottom: 16px; }
.sum .value { margin-top: 2px; line-height: 33px; }
.first-sum { margin-bottom: 16px; }
.line2 { display: flex; align-items: center; height: 33px; margin-top: 2px; font-size: 20.500px; color: #605e5c; }
.ic-list { width: 22px; height: 16px; margin-right: 5px; }
.num { margin-right: 24px; }
.num.pct { margin-right: 26px; }
.ic-info { width: 23px; height: 23px; }
```
